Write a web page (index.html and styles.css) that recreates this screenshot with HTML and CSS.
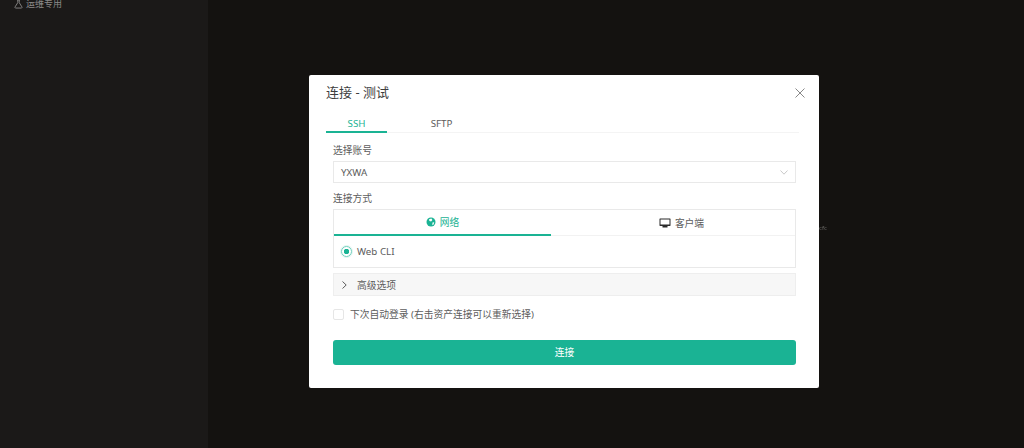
FILE: index.html
```html
<!DOCTYPE html>
<html lang="zh-CN">
  <head>
    <meta charset="UTF-8" />
    <meta name="viewport" content="width=device-width, initial-scale=1.0" />
    <title>连接 - 测试</title>
    <link rel="stylesheet" href="styles.css">
  </head>
  <body>
    <div class="app">
      <aside class="sidebar">
        <div class="side-item">
          <svg class="flask" viewBox="0 0 10 10" width="9" height="10"><path d="M3.6 .5h2.800M4.200 .5v3L1.200 8.200c-.4.700 0 1.300.7 1.300h6.200c.7 0 1.100-.6.7-1.300L5.800 3.500v-3" fill="none" stroke="currentColor" stroke-width="1"/></svg>
          <span>运维专用</span>
        </div>
      </aside>
      <main class="content"></main>
    </div>

    <!-- Connect dialog -->
    <div class="overlay">
      <span class="behind-text">cfc</span>
      <div class="modal" role="dialog">
        <div class="modal-header">
          <h2 class="modal-title">连接 - 测试</h2>
          <svg class="close" viewBox="0 0 10 10" width="10" height="10"><path d="M.5 .5l9 9M9.500 .5l-9 9" stroke="currentColor" stroke-width="1" fill="none"/></svg>
        </div>

        <div class="tabs" role="tablist">
          <div class="tab active" role="tab">SSH</div>
          <div class="tab" role="tab">SFTP</div>
        </div>

        <form class="form">
          <label class="label">选择账号</label>
          <div class="select">
            <span>YXWA</span>
            <svg class="select-arrow" viewBox="0 0 8 5" width="8" height="5"><path d="M.5 .5L4 4.200 7.500 .5" stroke="currentColor" stroke-width=".8" fill="none"/></svg>
          </div>

          <label class="label label-method">连接方式</label>
          <div class="method">
            <div class="method-tabs">
              <div class="method-tab active">
                <svg viewBox="0 0 10 10" width="10" height="10"><circle cx="5" cy="5" r="4.500" fill="currentColor"/><path d="M3 2.200l2.400-.6 1 1.300-1.300 1.500-1.700-.4zM6.500 5.500l1.700-.3-.6 2.300-1.300.7z" fill="#fff"/></svg>
                <span>网络</span>
              </div>
              <div class="method-tab client">
                <svg viewBox="0 0 12 10" width="12" height="10"><path d="M1 .5h10c.3 0 .5.200.5.500v6.500c0 .3-.2.500-.5.500H1c-.3 0-.5-.2-.5-.500V1c0-.3.200-.5.500-.5z" fill="#2b2b2b"/><rect x="1.500" y="1.500" width="9" height="5" fill="#fff"/><rect x="3.500" y="8" width="5" height="1.500" fill="#2b2b2b"/></svg>
                <span>客户端</span>
              </div>
            </div>
            <div class="method-body">
              <span class="radio"></span>
              <span>Web CLI</span>
            </div>
          </div>

          <div class="advanced">
            <svg viewBox="0 0 5 8" width="5" height="8"><path d="M.5 .5L4.200 4 .5 7.500" stroke="currentColor" stroke-width="1" fill="none"/></svg>
            <span>高级选项</span>
          </div>

          <div class="remember">
            <span class="checkbox"></span>
            <span>下次自动登录 (右击资产连接可以重新选择)</span>
          </div>

          <button class="connect" type="button">连接</button>
        </form>
      </div>
    </div>
  </body>
</html>
```

FILE: styles.css
```css
* {
  box-sizing: border-box;
}

html,
body {
  margin: 0;
  height: 100%;
  overflow: hidden;
}

body {
  font-family: "Noto Sans", "Noto Sans CJK SC", sans-serif;
  font-size: 9.75px;
  color: #5c5c5c;
  background-color: #141210;
}

/* Page behind the dialog */
.app {
  display: flex;
  height: 448px;
}

.sidebar {
  width: 208px;
  background-color: #1b1918;
  color: #8d8b8a;
}

.side-item {
  display: flex;
  align-items: center;
  gap: 3px;
  height: 8px;
  padding-left: 14px;
  font-size: 9px;
  line-height: 8px;
}

.side-item span {
  margin-top: -1px;
}

.content {
  flex: 1;
}

/* Dialog */
.overlay {
  position: fixed;
  top: 0;
  left: 0;
  width: 1024px;
  height: 448px;
  padding: 75px 0 0 309px;
}

.behind-text {
  position: absolute;
  left: 819px;
  top: 224px;
  font-size: 6px;
  line-height: 9px;
  color: #6a6866;
}

.modal {
  position: relative;
  width: 510px;
  height: 313px;
  padding: 0 20px 0 17px;
  background-color: #fff;
  border-radius: 2px;
}

.modal-header {
  display: flex;
  justify-content: space-between;
  align-items: center;
  height: 37px;
  padding-bottom: 4px;
}

.modal-title {
  margin: 0;
  font-size: 13px;
  font-weight: 400;
  color: #3d3d3d;
}

.close {
  margin: 3px -6px 0 0;
  color: #888;
}

.tabs {
  display: flex;
  height: 21px;
  border-bottom: 1px solid #f4f4f4;
}

.tab {
  width: 61px;
  height: 21px;
  margin-right: 24px;
  padding-top: 1px;
  text-align: center;
  line-height: 21px;
}

.tab.active {
  color: #1ab394;
  border-bottom: 2px solid #1ab394;
}

.form {
  display: flex;
  flex-direction: column;
  padding: 0 3px 0 7px;
}

.label {
  height: 28px;
  padding-top: 10px;
  line-height: 15px;
}

.label-method {
  height: 26px;
  padding-top: 8px;
}

.select {
  display: flex;
  justify-content: space-between;
  align-items: center;
  height: 22px;
  padding: 0 7px;
  border: 1px solid #e9e9e9;
}

.select-arrow {
  color: #bbb;
}

.method {
  height: 59px;
  border: 1px solid #e9e9e9;
}

.method-tabs {
  display: flex;
  height: 26px;
  border-bottom: 1px solid #f2f2f2;
}

.method-tab {
  display: flex;
  flex: 1;
  align-items: center;
  justify-content: center;
  gap: 4px;
  height: 26px;
}

.method-tab.active {
  flex: none;
  width: 217px;
  color: #1ab394;
  border-bottom: 2px solid #1ab394;
}

.method-tab.client {
  padding-left: 17px;
}

.method-body {
  display: flex;
  align-items: center;
  gap: 5px;
  height: 31px;
  padding-left: 7px;
}

.radio {
  width: 11px;
  height: 11px;
  border: 1px solid #6fd0bd;
  border-radius: 50%;
  background: radial-gradient(circle, #1ab394 0 2.500px, #fff 3px);
  box-shadow: 0 0 0 1px #e3f5f1;
}

.advanced {
  display: flex;
  align-items: center;
  gap: 10px;
  height: 23px;
  margin-top: 5px;
  padding-left: 8px;
  background-color: #f7f7f7;
  border: 1px solid #eee;
}

.remember {
  display: flex;
  align-items: center;
  gap: 6px;
  height: 14px;
  margin-top: 11px;
}

.checkbox {
  width: 11px;
  height: 11px;
  background-color: #fff;
  border: 1px solid #e6e6e6;
  border-radius: 2px;
}

.connect {
  height: 25px;
  margin-top: 19px;
  padding: 0 0 2px;
  font: inherit;
  color: #fff;
  background-color: #1ab394;
  border: 0;
  border-radius: 3px;
}
```
